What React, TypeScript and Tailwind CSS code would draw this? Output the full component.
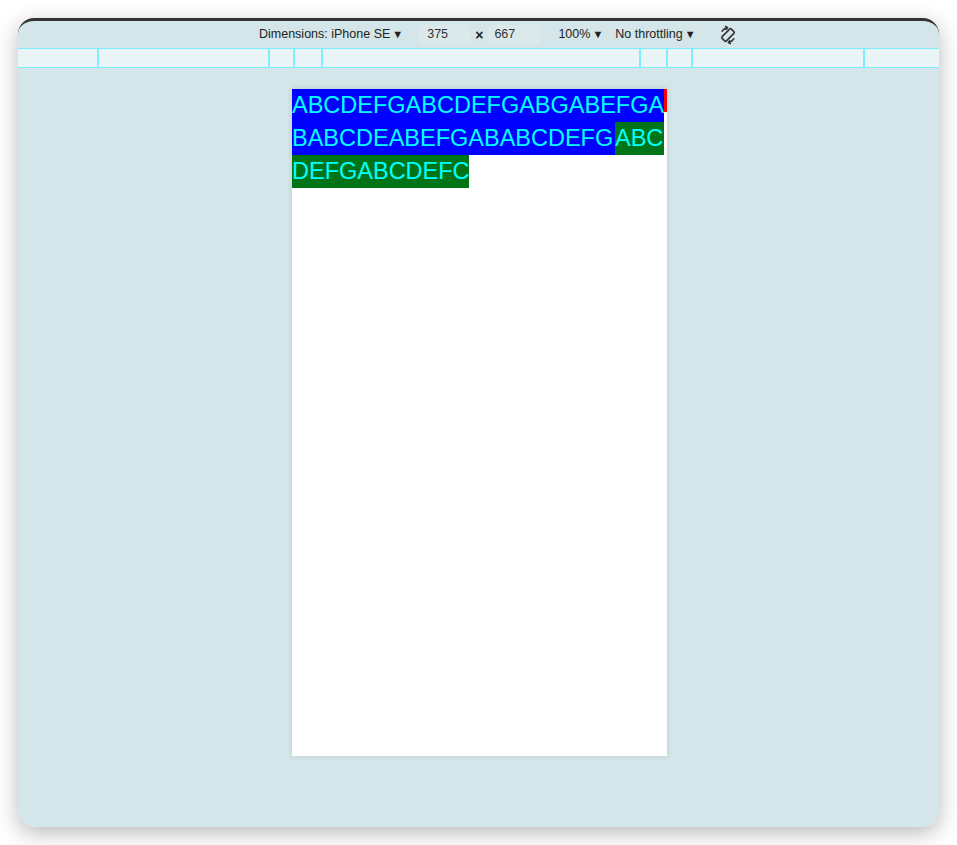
const segs = [79, 171, 25, 28, 318, 27, 25, 172, 76];

function Caret() {
  return <span className="ml-[2px] inline-block text-[11px] leading-none">▼</span>;
}

function RotateIcon() {
  return (
    <svg width="20" height="20" viewBox="0 0 20 20" fill="none" stroke="#333" strokeWidth="1.6" strokeLinecap="round">
      <rect x="7" y="3.5" width="6" height="13" rx="1.2" transform="rotate(45 10 10)" />
      <path d="M4.2 6.2 A7.5 7.5 0 0 1 9.5 2.6" />
      <path d="M9.5 2.6 L7.6 1.4 M9.5 2.6 L8.1 4.4" />
      <path d="M15.8 13.8 A7.5 7.5 0 0 1 10.5 17.4" />
      <path d="M10.5 17.4 L12.4 18.6 M10.5 17.4 L11.9 15.6" />
    </svg>
  );
}

export default function App() {
  return (
    <div className="min-h-screen w-full bg-white p-[18px] pb-[18px]" style={{ fontFamily: '"Liberation Sans", Arial, sans-serif' }}>
      <div className="flex h-[809px] w-[921px] flex-col overflow-hidden rounded-[16px] border-t-[3px] border-[#333] bg-[#d4e6e9] shadow-[0_6px_22px_rgba(0,0,0,0.28)]">
        {/* toolbar */}
        <div className="flex h-[27px] items-center pl-[241px] text-[12.5px] text-[#222]">
          <span>Dimensions: iPhone SE</span>
          <Caret />
          <div className="ml-[16px] flex h-[20px] w-[52px] items-center rounded-[3px] bg-[#dbe9eb] pl-[8px] text-[#333]">375</div>
          <span className="ml-[4px] text-[14px] font-semibold leading-none">×</span>
          <div className="ml-[5px] flex h-[20px] w-[52px] items-center rounded-[3px] bg-[#dbe9eb] pl-[6px] text-[#333]">667</div>
          <span className="ml-[18px]">100%</span>
          <Caret />
          <span className="ml-[12px]">No throttling</span>
          <Caret />
          <span className="ml-[22px] flex items-center">
            <RotateIcon />
          </span>
        </div>
        {/* media query bar */}
        <div className="flex h-[20px] border-y-[1.5px] border-[#7eeefe] bg-[#e8f4f5]">
          {segs.map((w, i) => (
            <div
              key={i}
              className={i === 0 ? 'h-full shrink-0' : 'h-full shrink-0 border-l-2 border-[#7eeefe]'}
              style={{ width: w }}
            />
          ))}
        </div>
        {/* device viewport */}
        <div className="flex flex-1 justify-center pt-[21px]">
          <div className="ml-[2px] h-[667px] w-[375px] bg-white shadow-[0_0_6px_rgba(0,0,0,0.12)]">
            <div className="text-[23.5px] leading-[33px] text-[#00ffff]">
              <div className="flex items-start">
                <span className="w-[372px] overflow-hidden whitespace-nowrap bg-[#0000ff]">ABCDEFGABCDEFGABGABEFGA</span>
                <span className="h-[23px] w-[3px] bg-[#ff0000]" />
              </div>
              <div className="flex">
                <span className="w-[323px] overflow-hidden whitespace-nowrap bg-[#0000ff]">BABCDEABEFGABABCDEFG</span>
                <span className="w-[49px] overflow-hidden whitespace-nowrap bg-[#007417]">ABC</span>
              </div>
              <div className="flex">
                <span className="w-[177px] overflow-hidden whitespace-nowrap bg-[#007417]">DEFGABCDEFC</span>
              </div>
            </div>
          </div>
        </div>
      </div>
    </div>
  );
}
